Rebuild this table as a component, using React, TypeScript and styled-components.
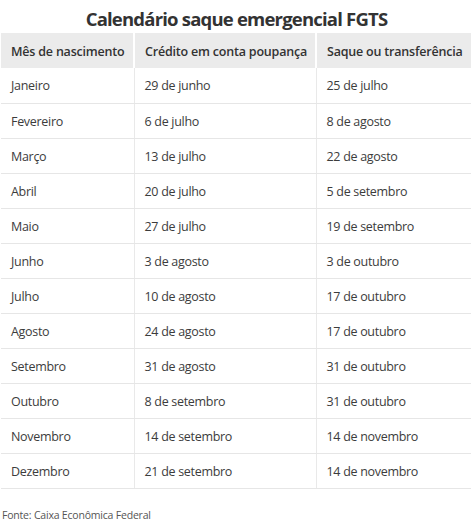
import React from "react";
import styled, { createGlobalStyle } from "styled-components";

const Global = createGlobalStyle`
  html, body { margin: 0; padding: 0; background: #fff; }
  body { font-family: "Open Sans", "Noto Sans", sans-serif; }
`;

const Wrap = styled.div`
  width: 472px;
  height: 528px;
  box-sizing: border-box;
  padding-left: 1px;
  display: flex;
  flex-direction: column;
`;

const Title = styled.h1`
  margin: 0;
  height: 33px;
  line-height: 37px;
  font-size: 18.5px;
  font-weight: 700;
  color: #333;
  text-align: center;
  letter-spacing: -0.8px;
`;

const Table = styled.table`
  width: 470px;
  border-collapse: collapse;
  table-layout: fixed;
`;

const Th = styled.th<{ $w: number }>`
  width: ${(p) => p.$w}px;
  height: 35px;
  box-sizing: border-box;
  padding: 1px 0 0 10px;
  background: #ebebeb;
  color: #333;
  font-size: 12.5px;
  font-weight: 600;
  letter-spacing: -0.2px;
  text-align: left;
  border-left: 2px solid #fff;
  white-space: nowrap;
  &:first-child { border-left: none; }
`;

const Td = styled.td`
  height: 35px;
  box-sizing: border-box;
  padding: 1px 0 0 10px;
  color: #3c3c3c;
  font-size: 12.5px;
  font-weight: 400;
  letter-spacing: -0.3px;
  border-bottom: 1px solid #e6e6e6;
  border-left: 1px solid #e9e9e9;
  white-space: nowrap;
  &:first-child { border-left: none; }
`;

const Source = styled.div`
  margin-top: 19px;
  padding-left: 1px;
  font-size: 10.5px;
  letter-spacing: -0.2px;
  color: #555;
`;

const rows: [string, string, string][] = [
  ["Janeiro", "29 de junho", "25 de julho"],
  ["Fevereiro", "6 de julho", "8 de agosto"],
  ["Março", "13 de julho", "22 de agosto"],
  ["Abril", "20 de julho", "5 de setembro"],
  ["Maio", "27 de julho", "19 de setembro"],
  ["Junho", "3 de agosto", "3 de outubro"],
  ["Julho", "10 de agosto", "17 de outubro"],
  ["Agosto", "24 de agosto", "17 de outubro"],
  ["Setembro", "31 de agosto", "31 de outubro"],
  ["Outubro", "8 de setembro", "31 de outubro"],
  ["Novembro", "14 de setembro", "14 de novembro"],
  ["Dezembro", "21 de setembro", "14 de novembro"],
];

export default function App() {
  return (
    <>
      <Global />
      <Wrap>
        <Title>Calendário saque emergencial FGTS</Title>
        <Table>
          <thead>
            <tr>
              <Th $w={133}>Mês de nascimento</Th>
              <Th $w={182}>Crédito em conta poupança</Th>
              <Th $w={155}>Saque ou transferência</Th>
            </tr>
          </thead>
          <tbody>
            {rows.map((r) => (
              <tr key={r[0]}>
                <Td>{r[0]}</Td>
                <Td>{r[1]}</Td>
                <Td>{r[2]}</Td>
              </tr>
            ))}
          </tbody>
        </Table>
        <Source>Fonte: Caixa Econômica Federal</Source>
      </Wrap>
    </>
  );
}
